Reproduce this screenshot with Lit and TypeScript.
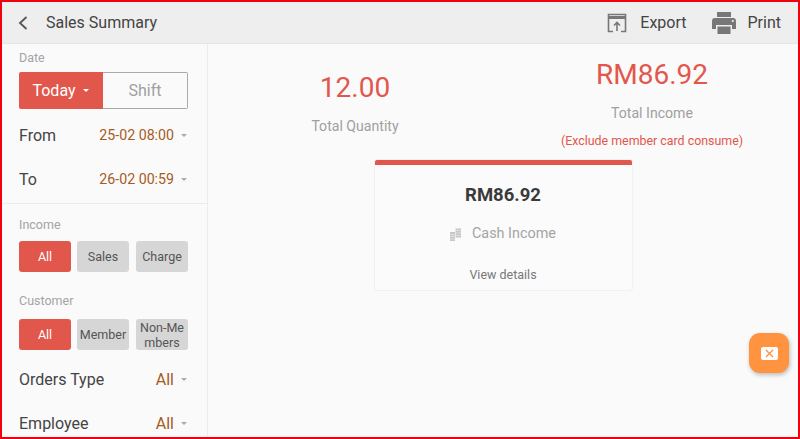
import { LitElement, html, css } from "lit";
import { customElement } from "lit/decorators.js";

@customElement("app-root")
export class AppRoot extends LitElement {
  static styles = css`
    :host { display: block; width: 800px; height: 439px; font-family: Roboto, "Noto Sans", sans-serif; }
    * { box-sizing: border-box; }
    .frame { position: relative; width: 800px; height: 439px; border: 2px solid #f00010; background: #fafafa; display: flex; flex-direction: column; overflow: hidden; }
    .top { height: 42px; flex: none; background: #eeeeee; display: flex; align-items: center; padding-left: 16px; color: #444; font-size: 16px; border-bottom: 1px solid #e6e6e6; }
    .title { margin-left: 16px; }
    .spacer { flex: 1; }
    .action { display: flex; align-items: center; }
    .export { gap: 13px; margin-right: 25px; }
    .print { gap: 12px; margin-right: 17px; }
    .body { flex: 1; display: flex; min-height: 0; }
    .side { width: 206px; flex: none; border-right: 1px solid #ececec; display: flex; flex-direction: column; overflow: hidden; }
    .sec1 { padding: 6px 19px 0 17px; height: 160px; border-bottom: 1px solid #ececec; flex: none; }
    .sec2 { padding: 13px 19px 0 17px; }
    .label { font-size: 12.5px; color: #a4a4a4; line-height: 16px; }
    .seg { display: flex; height: 37px; margin-top: 6px; font-size: 16px; }
    .seg div { display: flex; align-items: center; justify-content: center; width: 84px; }
    .seg .on { background: #e2574c; color: #fff; border-radius: 2px 0 0 2px; gap: 7px; padding-right: 1px; }
    .seg .off { flex: 1; border: 1px solid #a9a9a9; border-left: none; color: #a0a0a0; border-radius: 0 2px 2px 0; }
    .row { display: flex; align-items: center; height: 44px; font-size: 16px; color: #444; }
    .row.first { margin-top: 4px; }
    .row .val { margin-left: auto; color: #a65a1e; }
    .time { font-size: 14.2px; }
    .caret { width: 0; height: 0; border-left: 3.5px solid transparent; border-right: 3.5px solid transparent; border-top: 3.5px solid #aaa; margin-left: 7px; margin-right: 1px; }
    .caret.w { border-top-color: #fff; margin: 0; }
    .chips { display: grid; grid-template-columns: 58px 59px 52px; margin-top: 8px; margin-bottom: 21px; }
    .chip { width: 52px; height: 31px; border-radius: 3px; background: #d6d6d6; color: #555; font-size: 12.5px; line-height: 15px; display: flex; align-items: center; justify-content: center; text-align: center; word-break: break-all; }
    .chip.on { background: #e2574c; color: #fff; }
    .chips.tight { margin-top: 10px; margin-bottom: 7px; }
    .main { flex: 1; display: flex; flex-direction: column; align-items: center; min-width: 0; }
    .stats { width: 100%; display: grid; grid-template-columns: 294px 292px; column-gap: 4px; height: 116px; flex: none; }
    .stat { display: flex; flex-direction: column; align-items: center; }
    .s1 { padding-top: 26px; }
    .s2 { padding-top: 13px; }
    .num { font-size: 28px; line-height: 36px; color: #e2574c; }
    .cap { font-size: 14.1px; color: #a0a0a0; line-height: 18px; margin-top: 11px; }
    .note { font-size: 12.4px; color: #e2574c; line-height: 16px; margin-top: 11px; }
    .card { width: 257px; height: 130px; border-top: 5px solid #e2574c; border-radius: 2px; background: #fbfbfb; box-shadow: 0 0 2px rgba(0,0,0,.14); display: flex; flex-direction: column; align-items: center; }
    .amt { font-size: 18.5px; font-weight: 700; color: #3a3a3a; line-height: 24px; margin-top: 18px; }
    .cash { display: flex; align-items: center; gap: 11px; color: #a4a4a4; font-size: 14.4px; line-height: 18px; margin-top: 18px; }
    .view { font-size: 12.5px; color: #777; line-height: 16px; margin-top: 24px; }
    .fab { position: absolute; left: 747px; top: 331px; width: 40px; height: 40px; border-radius: 11px; background: #ff9340; box-shadow: 1px 2px 4px rgba(0,0,0,.25); display: flex; align-items: center; justify-content: center; }
  `;

  render() {
    return html`<div class="frame">
      <div class="top">
        <svg width="12" height="16" viewBox="0 0 12 16"><path d="M8.5 2 L2 8 L8.5 14" fill="none" stroke="#555" stroke-width="1.8"/></svg>
        <span class="title">Sales Summary</span>
        <span class="spacer"></span>
        <div class="action export">
          <svg width="20" height="20" viewBox="0 0 20 20" fill="none" stroke="#777"><path d="M6 18.5H1.5V1.5H18.5V18.5H14" stroke-width="1.6"/><path d="M1.5 4.5H18.5" stroke-width="3"/><path d="M10 18V10M7 12.5L10 9.5L13 12.5" stroke-width="1.6"/></svg>
          <span>Export</span>
        </div>
        <div class="action print">
          <svg width="24" height="22" viewBox="0 0 24 22" fill="#777"><path d="M5 0H19V5H5Z"/><path d="M3 6H21Q24 6 24 9V17H20V13H4V17H0V9Q0 6 3 6Z"/><path d="M5.5 14.5H18.5V22H5.5Z"/><circle cx="20.8" cy="9" r="1.1" fill="#eee"/></svg>
          <span>Print</span>
        </div>
      </div>
      <div class="body">
        <div class="side">
          <div class="sec1">
            <div class="label">Date</div>
            <div class="seg"><div class="on">Today <span class="caret w"></span></div><div class="off">Shift</div></div>
            <div class="row first"><span>From</span><span class="val time">25-02 08:00</span><span class="caret"></span></div>
            <div class="row"><span>To</span><span class="val time">26-02 00:59</span><span class="caret"></span></div>
          </div>
          <div class="sec2">
            <div class="label">Income</div>
            <div class="chips"><div class="chip on">All</div><div class="chip">Sales</div><div class="chip">Charge</div></div>
            <div class="label">Customer</div>
            <div class="chips tight"><div class="chip on">All</div><div class="chip">Member</div><div class="chip">Non-Me<br/>mbers</div></div>
            <div class="row"><span>Orders Type</span><span class="val">All</span><span class="caret"></span></div>
            <div class="row"><span>Employee</span><span class="val">All</span><span class="caret"></span></div>
          </div>
        </div>
        <div class="main">
          <div class="stats">
            <div class="stat s1"><div class="num">12.00</div><div class="cap">Total Quantity</div></div>
            <div class="stat s2"><div class="num">RM86.92</div><div class="cap">Total Income</div><div class="note">(Exclude member card consume)</div></div>
          </div>
          <div class="card">
            <div class="amt">RM86.92</div>
            <div class="cash">
              <svg width="11" height="13" viewBox="0 0 11 13" fill="#c6c6c6"><path d="M5.5 0.5H11V2.4H5.5ZM5.5 2.9H11V4.8H5.5ZM5.5 5.3H11V7.2H5.5ZM5.5 7.7H11V9.6H5.5ZM0 4H5V6H0ZM0 6.6H5V8.4H0ZM0 9H5V10.8H0ZM0 11.3H5V13H0Z"/></svg>
              <span>Cash Income</span>
            </div>
            <div class="view">View details</div>
          </div>
        </div>
        <div class="fab">
          <svg width="17" height="13" viewBox="0 0 17 13"><rect width="17" height="13" rx="2" fill="#fff"/><path d="M5 3L12 10M12 3L5 10" stroke="#ff9340" stroke-width="1.4"/></svg>
        </div>
      </div>
    </div>`;
  }
}
